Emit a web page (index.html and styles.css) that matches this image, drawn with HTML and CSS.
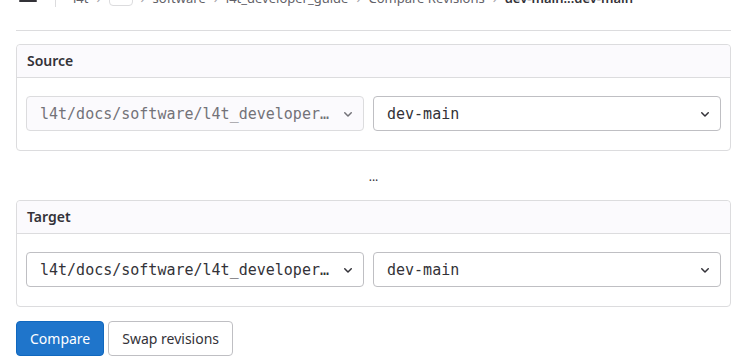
FILE: index.html
```html
<!DOCTYPE html>
<html lang="en">
<head>
	<meta charset="UTF-8">
	<title>Compare Revisions</title>
	<link rel="stylesheet" href="styles.css">
</head>
<body>
	<div class="page">
		<div class="topbar">
			<span class="burger">
				<svg width="18" height="16" viewBox="0 0 18 16"><rect x="0" y="2" width="18" height="2" rx="1"/><rect x="0" y="7" width="18" height="2" rx="1"/><rect x="0" y="12" width="18" height="2" rx="1"/></svg>
			</span>
			<span class="divider"></span>
			<nav class="crumbs">
				<a>l4t</a>
				<span class="sep">&rsaquo;</span>
				<span class="avatar"></span>
				<span class="sep">&rsaquo;</span>
				<a>software</a>
				<span class="sep">&rsaquo;</span>
				<a>l4t_developer_guide</a>
				<span class="sep">&rsaquo;</span>
				<a>Compare Revisions</a>
				<span class="sep">&rsaquo;</span>
				<b>dev-main...dev-main</b>
			</nav>
		</div>

		<div class="card">
			<div class="card-head">Source</div>
			<div class="card-body">
				<div class="dropdown project disabled">
					<span class="value">l4t/docs/software/l4t_developer_guide</span>
					<svg class="chev" width="16" height="16" viewBox="0 0 16 16"><path d="M4.22 6.22a.75.75 0 0 1 1.06 0L8 8.94l2.72-2.72a.75.75 0 1 1 1.06 1.06l-3.25 3.25a.75.75 0 0 1-1.06 0L4.22 7.28a.75.75 0 0 1 0-1.06Z"/></svg>
				</div>
				<div class="dropdown branch">
					<span class="value">dev-main</span>
					<svg class="chev" width="16" height="16" viewBox="0 0 16 16"><path d="M4.22 6.22a.75.75 0 0 1 1.06 0L8 8.94l2.72-2.72a.75.75 0 1 1 1.06 1.06l-3.25 3.25a.75.75 0 0 1-1.06 0L4.22 7.28a.75.75 0 0 1 0-1.06Z"/></svg>
				</div>
			</div>
		</div>

		<div class="dots">...</div>

		<div class="card">
			<div class="card-head">Target</div>
			<div class="card-body">
				<div class="dropdown project">
					<span class="value">l4t/docs/software/l4t_developer_guide</span>
					<svg class="chev" width="16" height="16" viewBox="0 0 16 16"><path d="M4.22 6.22a.75.75 0 0 1 1.06 0L8 8.94l2.72-2.72a.75.75 0 1 1 1.06 1.06l-3.25 3.25a.75.75 0 0 1-1.06 0L4.22 7.28a.75.75 0 0 1 0-1.06Z"/></svg>
				</div>
				<div class="dropdown branch">
					<span class="value">dev-main</span>
					<svg class="chev" width="16" height="16" viewBox="0 0 16 16"><path d="M4.22 6.22a.75.75 0 0 1 1.06 0L8 8.94l2.72-2.72a.75.75 0 1 1 1.06 1.06l-3.25 3.25a.75.75 0 0 1-1.06 0L4.22 7.28a.75.75 0 0 1 0-1.06Z"/></svg>
				</div>
			</div>
		</div>

		<div class="actions">
			<button class="btn btn-confirm">Compare</button>
			<button class="btn">Swap revisions</button>
		</div>
	</div>
</body>
</html>
```

FILE: styles.css
```css
*{
	margin: 0;
	padding: 0;
	box-sizing: border-box;
}
body{
	font-family: "Noto Sans", "Open Sans", sans-serif;
	font-size: 14px;
	color: #333238;
	background: #fff;
	overflow: hidden;
}
a{text-decoration: none; color: #626168;}
.page{
	width: 715px;
	margin-left: 16px;
}

.topbar{
	display: flex;
	align-items: flex-start;
	height: 43px;
	margin-top: -12px;
	line-height: 20px;
	border-bottom: 1px solid #dcdcde;
}
.burger{
	margin-left: 3px;
	height: 16px;
}
.burger svg{display: block; fill: #333238;}
.divider{
	width: 1px;
	height: 19px;
	margin-left: 18px;
	background: #dcdcde;
}
.crumbs{
	display: flex;
	align-items: flex-start;
	margin-left: 17px;
	font-size: 13px;
}
.crumbs b{font-weight: 600; color: #333238;}
.sep{
	color: #a4a3a8;
	margin: 0 8px;
}
.avatar{
	width: 24px;
	height: 24px;
	margin-top: -6px;
	border: 1px solid #dcdcde;
	border-radius: 4px;
}

.card{
	margin-top: 13px;
	border: 1px solid #dcdcde;
	border-radius: 4px;
}
.card + .dots + .card{margin-top: 0;}
.card-head{
	height: 33px;
	line-height: 32px;
	padding: 0 10px;
	background: #fbfafd;
	border-bottom: 1px solid #dcdcde;
	border-radius: 4px 4px 0 0;
	font-weight: 600;
}
.card-body{
	display: flex;
	gap: 9px;
	padding: 18px 9px 19px;
}
.dropdown{
	display: flex;
	align-items: center;
	gap: 7px;
	min-width: 0;
	height: 35px;
	padding: 0 7px 0 13px;
	border: 1px solid #bfbfc3;
	border-radius: 4px;
	background: #fff;
	font-family: "DejaVu Sans Mono", monospace;
	font-size: 15px;
	color: #333238;
}
.dropdown.project{flex: 0 0 338px;}
.dropdown.branch{flex: 1;}
.dropdown .value{
	flex: 1;
	min-width: 0;
	overflow: hidden;
	white-space: nowrap;
	text-overflow: ellipsis;
}
.dropdown.disabled{
	background: #fbfafd;
	border-color: #dcdcde;
	color: #737278;
}
.chev{flex: none; fill: #333238;}
.dropdown.disabled .chev{fill: #737278;}

.dots{
	padding: 16px 0 13px;
	line-height: 20px;
	text-align: center;
	font-size: 12px;
}

.actions{
	display: flex;
	gap: 4px;
	margin-top: 14px;
}
.btn{
	height: 35px;
	padding: 0 13px;
	border: 1px solid #bfbfc3;
	border-radius: 4px;
	background: #fff;
	color: #333238;
	font-family: inherit;
	font-size: 14px;
}
.btn-confirm{
	background: #1f75cb;
	border-color: #1068bf;
	color: #fff;
}
```
